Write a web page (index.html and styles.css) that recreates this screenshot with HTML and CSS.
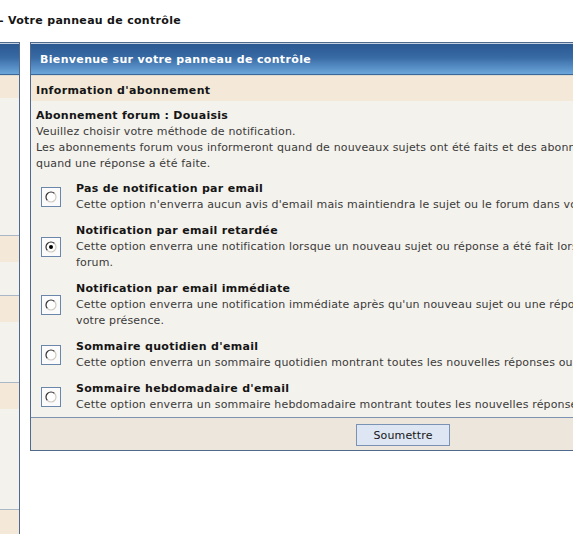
FILE: index.html
```html
<!DOCTYPE html>
<html lang="fr">
<head>
    <meta charset="UTF-8">
    <meta name="viewport" content="width=device-width, initial-scale=1.0">
    <title>Votre panneau de contrôle</title>
    <link rel="stylesheet" href="styles.css">
</head>
<body>
<div class="page">
    <div class="crumb">Forum - Votre panneau de contrôle</div>

    <div class="layout">
        <!-- Menu du panneau -->
        <div class="side">
            <div class="cat-head">Panneau</div>
            <div class="side-title side-title-first">Accueil</div>
            <ul class="side-list side-list-1">
                <li>Aperçu</li>
                <li>Abonnements</li>
                <li>Favoris</li>
                <li>Brouillons</li>
                <li>Pièces jointes</li>
                <li>Notifications</li>
                <li>Historique</li>
                <li>Options</li>
            </ul>
            <div class="side-title">Profil</div>
            <ul class="side-list side-list-2">
                <li>Informations</li>
                <li>Signature</li>
            </ul>
            <div class="side-title">Préférences</div>
            <ul class="side-list side-list-3">
                <li>Affichage</li>
                <li>Messages</li>
                <li>Vie privée</li>
            </ul>
            <div class="side-title">Messagerie</div>
            <ul class="side-list side-list-4">
                <li>Nouveau</li>
                <li>Réception</li>
                <li>Envoyés</li>
                <li>Boîte d'envoi</li>
                <li>Règles</li>
                <li>Dossiers</li>
            </ul>
            <div class="side-title">Amis</div>
            <ul class="side-list side-list-5">
                <li>Liste d'amis</li>
                <li>Ignorés</li>
            </ul>
        </div>

        <!-- Abonnement -->
        <form class="panel" action="#" method="post">
            <div class="cat-head">Bienvenue sur votre panneau de contrôle</div>
            <div class="row-title">Information d'abonnement</div>
            <div class="content">
                <div class="forum-name">Abonnement forum : Douaisis</div>
                <p class="intro">Veuillez choisir votre méthode de notification.<br>Les abonnements forum vous informeront quand de nouveaux sujets ont été faits et des abonnements aux sujets vous informeront<br>quand une réponse a été faite.</p>

                <div class="options">
                    <label class="option">
                        <span class="radio-box">
                            <svg width="12" height="12" viewBox="0 0 12 12"><circle cx="6" cy="6" r="5" fill="#fff"/><path d="M2.46 9.54A5 5 0 0 1 9.54 2.46" fill="none" stroke="#333" stroke-width="1.2"/><path d="M9.54 2.46A5 5 0 0 1 2.46 9.54" fill="none" stroke="#cfcbc2" stroke-width="1.2"/></svg>
                        </span>
                        <span class="option-text">
                            <span class="option-title">Pas de notification par email</span>
                            Cette option n'enverra aucun avis d'email mais maintiendra le sujet ou le forum dans votre liste d'abonnements.
                        </span>
                    </label>
                    <label class="option">
                        <span class="radio-box">
                            <svg width="12" height="12" viewBox="0 0 12 12"><circle cx="6" cy="6" r="5" fill="#fff"/><path d="M2.46 9.54A5 5 0 0 1 9.54 2.46" fill="none" stroke="#333" stroke-width="1.2"/><path d="M9.54 2.46A5 5 0 0 1 2.46 9.54" fill="none" stroke="#cfcbc2" stroke-width="1.2"/><circle cx="6" cy="6" r="2" fill="#000"/></svg>
                        </span>
                        <span class="option-text">
                            <span class="option-title">Notification par email retardée</span>
                            Cette option enverra une notification lorsque un nouveau sujet ou réponse a été fait lors de votre dernière visite sur le<br>forum.
                        </span>
                    </label>
                    <label class="option">
                        <span class="radio-box">
                            <svg width="12" height="12" viewBox="0 0 12 12"><circle cx="6" cy="6" r="5" fill="#fff"/><path d="M2.46 9.54A5 5 0 0 1 9.54 2.46" fill="none" stroke="#333" stroke-width="1.2"/><path d="M9.54 2.46A5 5 0 0 1 2.46 9.54" fill="none" stroke="#cfcbc2" stroke-width="1.2"/></svg>
                        </span>
                        <span class="option-text">
                            <span class="option-title">Notification par email immédiate</span>
                            Cette option enverra une notification immédiate après qu'un nouveau sujet ou une réponse a été faite, quelle que soit<br>votre présence.
                        </span>
                    </label>
                    <label class="option">
                        <span class="radio-box">
                            <svg width="12" height="12" viewBox="0 0 12 12"><circle cx="6" cy="6" r="5" fill="#fff"/><path d="M2.46 9.54A5 5 0 0 1 9.54 2.46" fill="none" stroke="#333" stroke-width="1.2"/><path d="M9.54 2.46A5 5 0 0 1 2.46 9.54" fill="none" stroke="#cfcbc2" stroke-width="1.2"/></svg>
                        </span>
                        <span class="option-text">
                            <span class="option-title">Sommaire quotidien d'email</span>
                            Cette option enverra un sommaire quotidien montrant toutes les nouvelles réponses ou sujets du forum.
                        </span>
                    </label>
                    <label class="option">
                        <span class="radio-box">
                            <svg width="12" height="12" viewBox="0 0 12 12"><circle cx="6" cy="6" r="5" fill="#fff"/><path d="M2.46 9.54A5 5 0 0 1 9.54 2.46" fill="none" stroke="#333" stroke-width="1.2"/><path d="M9.54 2.46A5 5 0 0 1 2.46 9.54" fill="none" stroke="#cfcbc2" stroke-width="1.2"/></svg>
                        </span>
                        <span class="option-text">
                            <span class="option-title">Sommaire hebdomadaire d'email</span>
                            Cette option enverra un sommaire hebdomadaire montrant toutes les nouvelles réponses ou sujets du forum.
                        </span>
                    </label>
                </div>
            </div>
            <div class="footer">
                <button type="submit" class="btn">Soumettre</button>
            </div>
        </form>
    </div>
</div>
</body>
</html>
```

FILE: styles.css
```css
html, body {
    margin: 0;
    padding: 0;
    overflow: hidden;
}
body {
    background-color: #fff;
    font-family: Verdana, "DejaVu Sans", sans-serif;
    font-size: 11px;
    letter-spacing: 0.15px;
    color: #3a3a3a;
}
.page {
    width: 573px;
    height: 534px;
    overflow: hidden;
}
.crumb {
    margin-left: -46px;
    padding-top: 14px;
    height: 14px;
    line-height: 14px;
    font-size: 11px;
    font-weight: bold;
    letter-spacing: 0.3px;
    color: #151515;
    white-space: nowrap;
}
.layout {
    display: flex;
    align-items: flex-start;
    gap: 10px;
    margin-top: 14px;
    margin-left: -150px;
}
.side, .panel {
    box-sizing: border-box;
    min-width: 0;
    overflow: hidden;
    border: 1px solid #4f6a8d;
    background-color: #f4f2ec;
}
.side {
    flex: 0 0 170px;
}
.panel {
    flex: 0 0 746px;
    margin: 0;
}
.cat-head {
    height: 32px;
    box-sizing: border-box;
    padding: 0 9px;
    border-top: 1px solid #c3d1df;
    border-bottom: 1px solid #3b6899;
    background: linear-gradient(#2b5891, #386aa4 45%, #6ba6da);
    color: #fff;
    font-size: 11px;
    font-weight: bold;
    letter-spacing: 0.35px;
    line-height: 32px;
    white-space: nowrap;
}
.row-title {
    height: 26px;
    box-sizing: border-box;
    padding: 5px 0 0 5px;
    border-top: 1px solid #dddad2;
    background-color: #f4e9d8;
    font-size: 11px;
    font-weight: bold;
    letter-spacing: 0.35px;
    line-height: 19px;
    color: #151515;
}
.side-title {
    height: 27px;
    box-sizing: border-box;
    padding: 3px 0 0 8px;
    border-top: 1px solid #a9b7c6;
    background-color: #f4e9d8;
    font-size: 11px;
    font-weight: bold;
    line-height: 20px;
    color: #151515;
}
.side-title-first {
    height: 23px;
    padding-top: 1px;
    border-top-color: #dddad2;
}
.side-list {
    list-style: none;
    margin: 0;
    padding: 4px 0 0 10px;
    box-sizing: border-box;
    overflow: hidden;
    line-height: 16px;
}
.side-list-1 { height: 137px; }
.side-list-2 { height: 33px; }
.side-list-3 { height: 60px; }
.side-list-4 { height: 100px; }
.side-list-5 { height: 80px; }
.content {
    padding: 7px 5px 0;
}
.forum-name {
    font-size: 11px;
    font-weight: bold;
    letter-spacing: 0.28px;
    line-height: 16px;
    color: #151515;
}
.intro {
    margin: 0;
    line-height: 16px;
    white-space: nowrap;
}
.options {
    margin-top: 4px;
}
.option {
    display: flex;
    align-items: center;
    padding: 5px 0 5px 5px;
}
.option:last-child {
    padding-bottom: 4px;
}
.radio-box {
    flex: 0 0 20px;
    height: 20px;
    box-sizing: border-box;
    margin-right: 15px;
    border: 1px solid #6a87ab;
    background-color: #fbfbfb;
    display: flex;
    align-items: center;
    justify-content: center;
}
.option-text {
    line-height: 16px;
    white-space: nowrap;
}
.option-title {
    display: block;
    font-weight: bold;
    letter-spacing: 0.3px;
    color: #151515;
}
.footer {
    padding: 6px 0 4px;
    border-top: 1px solid #7c93b1;
    background-color: #ede6dc;
    text-align: center;
}
.btn {
    display: inline-block;
    vertical-align: top;
    width: 94px;
    height: 22px;
    padding: 0;
    border: 1px solid #7a93b4;
    background-color: #dde6f2;
    font-family: Verdana, "DejaVu Sans", sans-serif;
    font-size: 11px;
    letter-spacing: 0.15px;
    color: #151515;
}
```
